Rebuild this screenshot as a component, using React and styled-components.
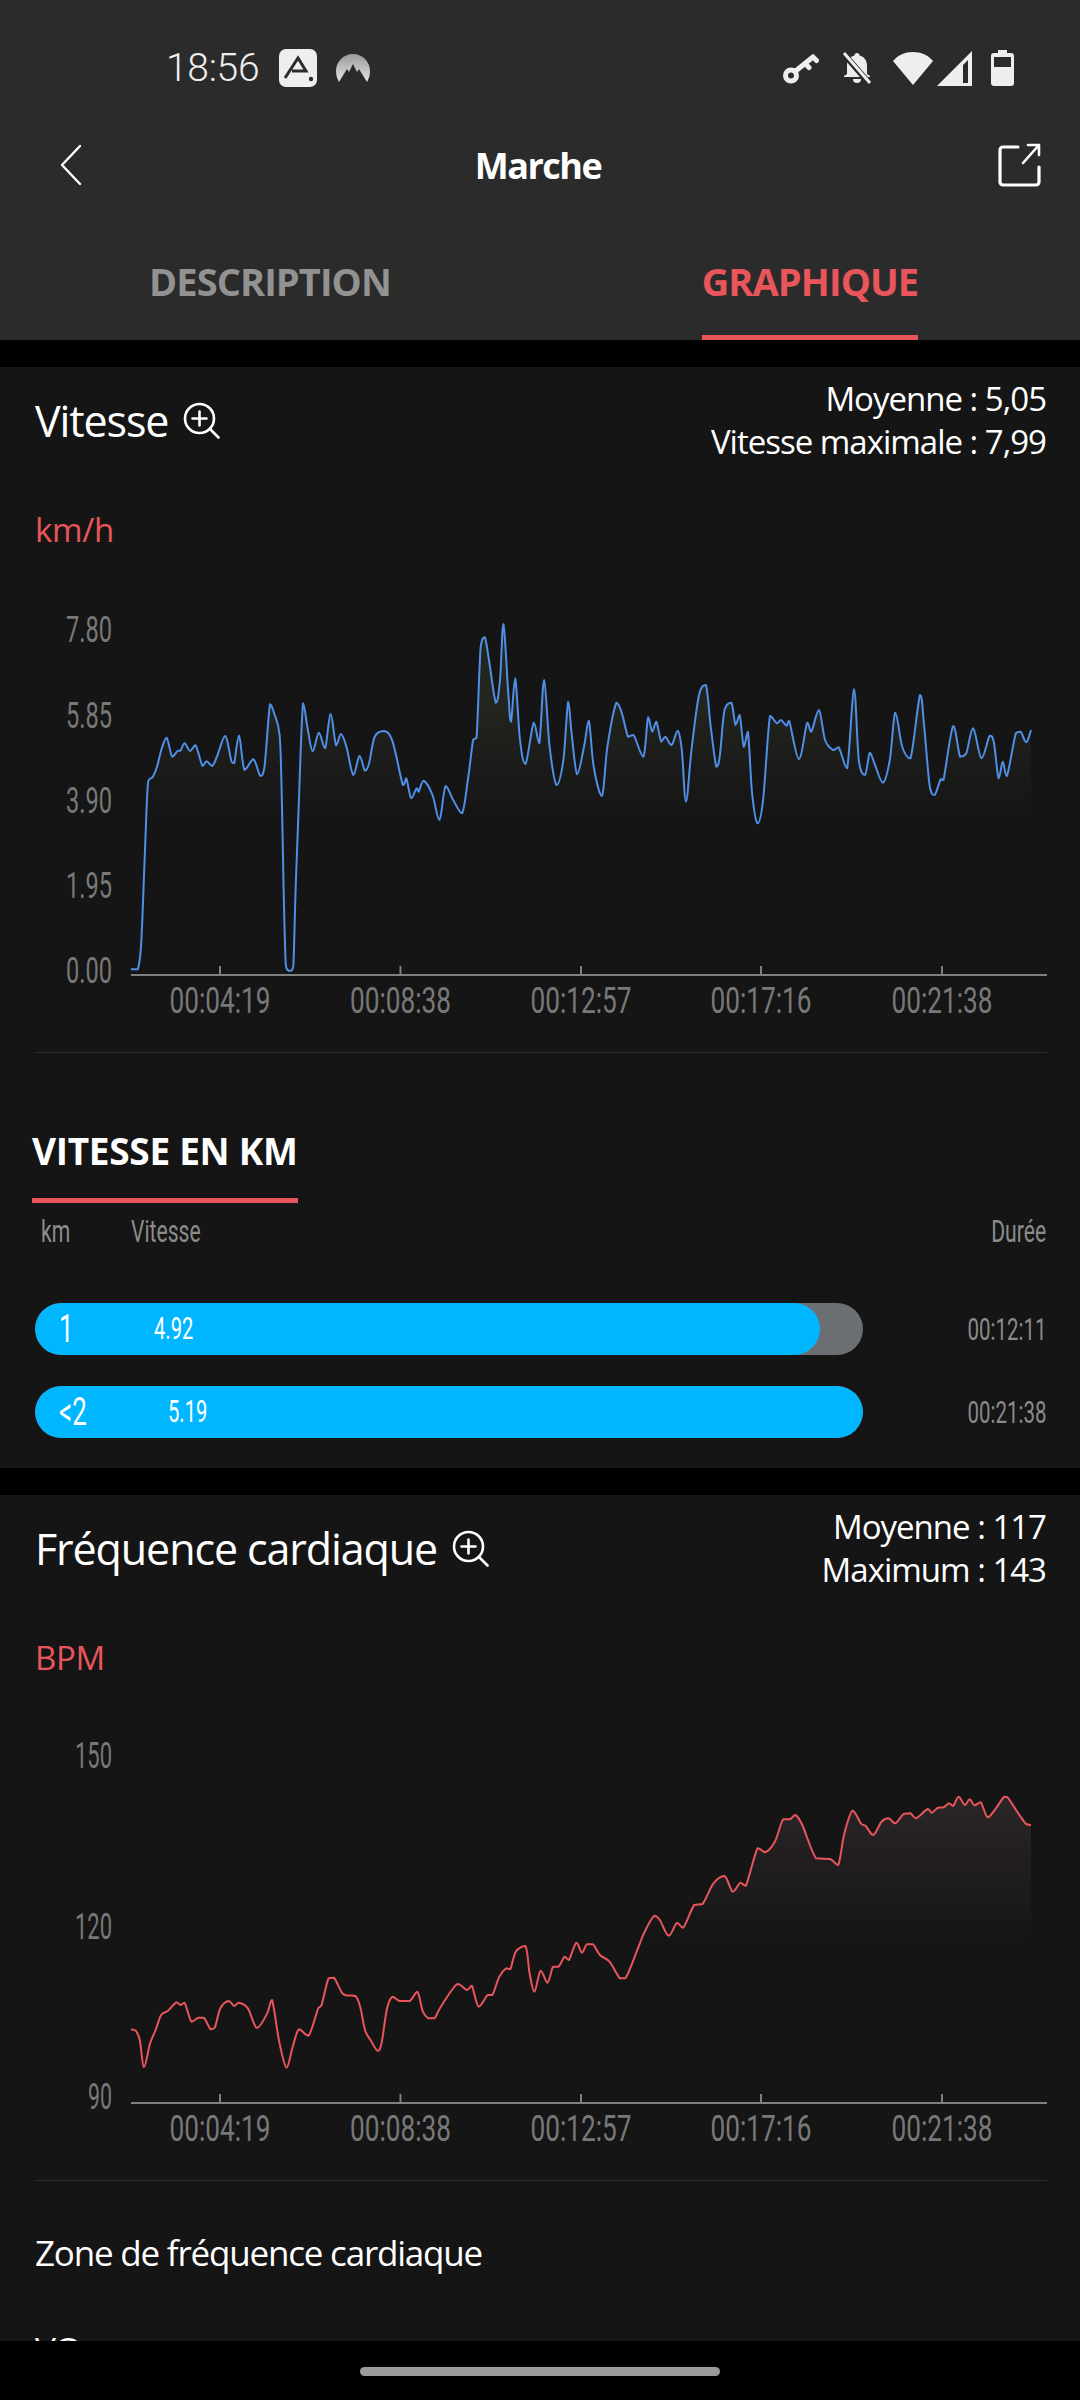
import styled, { createGlobalStyle } from "styled-components";

const RED = "#e8565b";
const SANS = `"Open Sans", "Noto Sans", sans-serif`;
const NUM = `Roboto, "Liberation Sans", sans-serif`;

const GlobalStyle = createGlobalStyle`
  html, body {
    margin: 0;
    padding: 0;
    background: #000;
  }
  * {
    box-sizing: border-box;
  }
`;

const Page = styled.div`
  width: 1080px;
  height: 2400px;
  display: flex;
  flex-direction: column;
  overflow: hidden;
  background: #000;
  font-family: ${SANS};
  color: #fff;
`;

const Header = styled.header`
  height: 340px;
  flex: none;
  background: #2b2b2b;
`;

const StatusBar = styled.div`
  height: 110px;
  padding: 26px 66px 0 166px;
  display: flex;
  align-items: center;
`;

const Clock = styled.span`
  font-family: ${NUM};
  font-size: 39px;
  font-weight: 300;
  color: #eee;
  letter-spacing: -0.3px;
  margin-right: 20px;
`;

const StatusIcon = styled.svg`
  flex: none;
  display: block;
  margin-left: ${(p) => p.$ml || 0}px;
`;

const StatusRight = styled.div`
  margin-left: auto;
  display: flex;
  align-items: center;
`;

const TopBar = styled.div`
  height: 110px;
  padding: 0 39px 0 60px;
  display: flex;
  align-items: center;
  justify-content: space-between;
`;

const Title = styled.h1`
  margin: 0 4px 0 0;
  font-size: 36px;
  font-weight: 700;
  letter-spacing: -1.5px;
`;

const Tabs = styled.nav`
  height: 120px;
  display: grid;
  grid-template-columns: 1fr 1fr;
`;

const TabCell = styled.div`
  display: flex;
  justify-content: center;
`;

const Tab = styled.span`
  height: 120px;
  padding-top: 33px;
  font-size: 38px;
  line-height: 56px;
  font-weight: 700;
  letter-spacing: -0.9px;
  color: ${(p) => (p.$active ? RED : "#929292")};
  border-bottom: 5px solid ${(p) => (p.$active ? RED : "transparent")};
`;

const Section = styled.section`
  flex: none;
  background: #151515;
  padding-bottom: 30px;
  margin-top: 27px;
`;

const LastSection = styled(Section)`
  flex: 1;
  min-height: 0;
  padding-bottom: 0;
  overflow: hidden;
`;

const SectionHead = styled.div`
  padding: 10px 34px 0 35px;
  height: 97px;
  display: flex;
  justify-content: space-between;
  align-items: flex-start;
`;

const SectionTitle = styled.h2`
  margin: 0;
  height: 86px;
  display: flex;
  align-items: center;
  gap: 15px;
  font-size: 43px;
  font-weight: 400;
  letter-spacing: -1.1px;
`;

const Stats = styled.div`
  text-align: right;
  font-size: 33px;
  line-height: 43px;
  letter-spacing: -1px;
`;

const Unit = styled.div`
  margin: 46px 0 0 35px;
  height: 40px;
  line-height: 40px;
  font-size: 33px;
  letter-spacing: -0.3px;
  color: ${RED};
`;

const ChartSvg = styled.svg`
  display: block;
`;

const AxisLabel = styled.text`
  font-family: ${NUM};
  font-size: 37px;
  fill: #787878;
`;

const Divider = styled.div`
  height: 1px;
  margin: 0 33px 0 35px;
  background: #2b2b2b;
`;

const Subhead = styled.h3`
  display: inline-block;
  margin: 73px 0 0 32px;
  padding-bottom: 22px;
  font-size: 37px;
  line-height: 50px;
  font-weight: 700;
  letter-spacing: -0.3px;
  border-bottom: 5px solid ${RED};
`;

const ColHeads = styled.div`
  margin-top: 10px;
  height: 36px;
  padding: 0 34px 0 41px;
  display: flex;
  align-items: center;
  color: #8c8c8c;
`;

const Narrow = styled.span`
  display: inline-block;
  font-family: ${NUM};
  font-size: ${(p) => p.$size || 32}px;
  line-height: 36px;
  white-space: nowrap;
  transform: scaleX(${(p) => p.$scale || 0.66});
  transform-origin: ${(p) => (p.$right ? "right" : "left")} center;
`;

const KmHead = styled.div`
  width: 90px;
`;

const DurationHead = styled.div`
  margin-left: auto;
`;

const Rows = styled.div`
  margin-top: 54px;
  display: flex;
  flex-direction: column;
  gap: 31px;
`;

const Row = styled.div`
  height: 52px;
  padding: 0 34px 0 35px;
  display: flex;
  align-items: center;
  justify-content: space-between;
`;

const Track = styled.div`
  width: 828px;
  height: 52px;
  border-radius: 26px;
  background: #6b6e72;
  overflow: hidden;
`;

const Fill = styled.div`
  height: 100%;
  border-radius: 26px;
  background: #00b7ff;
  padding-left: 24px;
  display: flex;
  align-items: center;
  color: #fff;
`;

const KmCell = styled.div`
  width: ${(p) => p.$w}px;
  flex: none;
`;

const Duration = styled.div`
  color: #8a8a8a;
`;

const ListItem = styled.div`
  margin: ${(p) => p.$top}px 0 0 35px;
  height: 50px;
  line-height: 50px;
  font-size: 35px;
  letter-spacing: -1.2px;
  white-space: nowrap;
`;

const BottomNav = styled.div`
  height: 59px;
  flex: none;
  padding-top: 2px;
  background: #000;
  display: flex;
  align-items: center;
  justify-content: center;
`;

const HomePill = styled.div`
  width: 360px;
  height: 9px;
  border-radius: 5px;
  background: #9b9b9b;
`;

// traced from the graph, x is 1568 wide and y is 3x
const speedPoints = [[190,1228],[200,1228],[205,1150],[210,900],[215,665],[222,650],[228,620],[235,565],[242,533],[250,590],[258,572],[262,572],[268,550],[276,573],[284,556],[294,618],[300,604],[308,618],[315,590],[327,528],[336,604],[340,610],[347,527],[355,630],[368,598],[378,648],[384,620],[392,433],[398,460],[406,525],[409,700],[412,1000],[415,1215],[419,1232],[423,1232],[426,1215],[429,1000],[433,780],[440,430],[447,510],[454,574],[463,518],[472,565],[480,462],[488,556],[495,522],[503,560],[513,645],[522,588],[530,632],[536,610],[544,530],[558,513],[570,545],[585,675],[590,655],[597,715],[605,685],[608,695],[615,662],[628,705],[638,780],[647,678],[658,720],[671,760],[680,650],[687,540],[692,532],[698,260],[704,232],[710,300],[720,428],[726,360],[731,192],[738,400],[742,485],[748,355],[755,540],[763,612],[775,488],[783,550],[790,360],[798,560],[808,675],[818,600],[825,425],[830,520],[838,643],[848,560],[855,482],[862,620],[874,708],[882,560],[895,428],[903,460],[912,530],[920,525],[934,590],[941,472],[947,515],[953,485],[960,545],[966,530],[975,555],[984,512],[990,570],[996,725],[1004,570],[1015,405],[1025,375],[1032,500],[1040,620],[1045,590],[1052,450],[1062,428],[1068,495],[1074,465],[1080,560],[1086,515],[1092,700],[1100,790],[1108,720],[1118,468],[1128,490],[1134,480],[1142,497],[1146,483],[1160,597],[1172,488],[1178,515],[1189,450],[1198,540],[1210,570],[1218,562],[1230,625],[1240,388],[1247,600],[1256,645],[1263,578],[1270,612],[1282,668],[1292,600],[1300,458],[1310,560],[1322,595],[1336,405],[1342,500],[1350,680],[1357,705],[1366,657],[1370,660],[1384,498],[1394,590],[1403,580],[1413,505],[1425,595],[1437,527],[1443,545],[1450,655],[1456,605],[1462,648],[1475,520],[1482,515],[1490,547],[1497,510]];

const heartPoints = [[190,988],[197,992],[203,1020],[209,1102],[218,1030],[226,990],[234,945],[244,932],[256,907],[262,915],[268,908],[278,965],[288,953],[296,953],[306,988],[312,982],[320,925],[332,903],[340,918],[347,908],[360,925],[373,984],[388,940],[395,900],[405,1020],[416,1103],[425,1040],[434,988],[448,1007],[462,925],[467,915],[477,835],[485,833],[497,880],[503,886],[516,888],[523,920],[530,990],[538,1020],[548,1052],[554,1030],[562,925],[570,890],[580,903],[595,903],[606,875],[614,935],[622,955],[631,955],[640,920],[664,852],[678,870],[685,857],[695,920],[708,885],[715,885],[725,830],[735,805],[741,808],[749,755],[763,738],[769,820],[776,875],[785,812],[795,848],[803,800],[811,800],[820,770],[826,780],[837,728],[845,758],[852,733],[861,733],[871,765],[885,785],[900,835],[908,835],[918,790],[935,700],[950,647],[958,660],[971,707],[983,668],[992,683],[1008,615],[1020,612],[1036,550],[1052,528],[1064,575],[1075,548],[1083,557],[1100,445],[1111,457],[1125,425],[1137,358],[1147,358],[1155,345],[1165,375],[1185,475],[1205,477],[1217,495],[1226,400],[1238,332],[1250,370],[1257,378],[1268,405],[1280,365],[1290,355],[1300,370],[1312,342],[1322,340],[1330,355],[1347,327],[1353,338],[1362,323],[1370,322],[1378,310],[1384,318],[1392,290],[1401,315],[1408,298],[1415,316],[1424,307],[1434,352],[1446,325],[1458,290],[1463,292],[1477,335],[1490,372],[1497,375]];

const xTicks = [
  { x: 220, label: "00:04:19" },
  { x: 400.5, label: "00:08:38" },
  { x: 581, label: "00:12:57" },
  { x: 761, label: "00:17:16" },
  { x: 942, label: "00:21:38" },
];

const CHART_H = 502;
const AXIS_Y = 425;

const clamp = (v, a, b) => Math.min(Math.max(v, Math.min(a, b)), Math.max(a, b));

// catmull-rom through the traced points, controls kept inside each segment so peaks don't overshoot
const smoothPath = (pts) => {
  let d = `M${pts[0][0]} ${pts[0][1]}`;
  for (let i = 0; i < pts.length - 1; i++) {
    const p0 = pts[i - 1] || pts[i];
    const p1 = pts[i];
    const p2 = pts[i + 1];
    const p3 = pts[i + 2] || p2;
    const c1x = p1[0] + (p2[0] - p0[0]) / 6;
    const c1y = clamp(p1[1] + (p2[1] - p0[1]) / 6, p1[1], p2[1]);
    const c2x = p2[0] - (p3[0] - p1[0]) / 6;
    const c2y = clamp(p2[1] - (p3[1] - p1[1]) / 6, p1[1], p2[1]);
    d += `C${c1x.toFixed(1)} ${c1y.toFixed(1)} ${c2x.toFixed(1)} ${c2y.toFixed(1)} ${p2[0].toFixed(1)} ${p2[1].toFixed(1)}`;
  }
  return d;
};

const Chart = ({ id, points, originY, stroke, tint, fadeTop, fadeBottom, yLabels }) => {
  const pts = points.map(([x, y]) => [x / 1.452, originY + y / 3]);
  const line = smoothPath(pts);
  const last = pts[pts.length - 1];
  const area = `${line}L${last[0]} ${fadeBottom}L${pts[0][0]} ${fadeBottom}Z`;
  return (
    <ChartSvg width="1080" height={CHART_H} viewBox={`0 0 1080 ${CHART_H}`}>
      <defs>
        <linearGradient id={id} gradientUnits="userSpaceOnUse" x1="0" x2="0" y1={fadeTop} y2={fadeBottom}>
          <stop offset="0" stopColor={tint} />
          <stop offset="1" stopColor={tint} stopOpacity="0" />
        </linearGradient>
      </defs>
      <path d={area} fill={`url(#${id})`} />
      <path d={line} fill="none" stroke={stroke} strokeWidth="2" strokeLinejoin="round" />
      <rect x="131" y={AXIS_Y - 1} width="916" height="2" fill="#808080" />
      {xTicks.map((t) => (
        <rect key={t.x} x={t.x - 1} y={AXIS_Y - 9} width="2" height="9" fill="#808080" />
      ))}
      {xTicks.map((t) => (
        <AxisLabel key={t.label} x={t.x - 50.5} y={AXIS_Y + 38} textLength="101" lengthAdjust="spacingAndGlyphs">
          {t.label}
        </AxisLabel>
      ))}
      {yLabels.map((l) => {
        const w = { 4: 46, 3: 37, 2: 24 }[l.text.length];
        return (
          <AxisLabel key={l.text} x={112 - w} y={l.y + 11} textLength={w} lengthAdjust="spacingAndGlyphs">
            {l.text}
          </AxisLabel>
        );
      })}
    </ChartSvg>
  );
};

const ZoomIcon = () => (
  <svg width="37" height="37" viewBox="0 0 37 37" fill="none" stroke="#fff" strokeWidth="2.6" strokeLinecap="round">
    <circle cx="16.5" cy="16.5" r="14.5" />
    <path d="M27 27l8.500 8.500M16.500 9.500v14M9.500 16.500h14" />
  </svg>
);

const BackIcon = () => (
  <svg width="22" height="42" viewBox="0 0 22 42" fill="none" stroke="#fff" strokeWidth="2.4" strokeLinecap="round" strokeLinejoin="round">
    <path d="M20 2L2 21l18 19" />
  </svg>
);

const ShareIcon = () => (
  <svg width="43" height="44" viewBox="0 0 43 44" fill="none" stroke="#fff" strokeWidth="3.2" strokeLinecap="round" strokeLinejoin="round">
    <path d="M20 4H5a3 3 0 0 0-3 3v32a3 3 0 0 0 3 3h33a3 3 0 0 0 3-3V24" />
    <path d="M25 20L41 2M30 2h11v10" strokeWidth="2.6" />
  </svg>
);

const StatusIcons = () => (
  <StatusRight>
    {/* vpn key */}
    <StatusIcon width="36" height="32" viewBox="0 0 36 32" fill="none" stroke="#eee" strokeWidth="5">
      <circle cx="8" cy="23.5" r="5.5" />
      <path d="M12 19.500L30 5M30 5l3.500 3.500M22 11.500l4 4" strokeLinecap="round" />
    </StatusIcon>
    {/* muted bell */}
    <StatusIcon $ml={22} width="32" height="32" viewBox="0 0 32 32" fill="#eee">
      <path d="M16 1c1.500 0 2.600 1 2.600 2.400C24 4.800 26 9 26 14v8l3 2v1H3v-1l3-2v-8C6 9 8 4.800 13.400 3.400 13.400 2 14.500 1 16 1z" />
      <path d="M12 27h8a4 4 0 0 1-8 0z" />
      <path d="M2 1l26 30" stroke="#2b2b2b" strokeWidth="6" />
      <path d="M3 1l26 30" stroke="#eee" strokeWidth="3" />
    </StatusIcon>
    {/* wifi */}
    <StatusIcon $ml={20} width="40" height="33" viewBox="0 0 40 33" fill="#eee">
      <path d="M0 9C5 3 12 0 20 0s15 3 20 9L20 33z" />
    </StatusIcon>
    {/* signal */}
    <StatusIcon $ml={4} width="36" height="35" viewBox="0 0 36 35" fill="#eee">
      <path fillRule="evenodd" d="M0 35L35 0v35zM26 32h5V9l-5 5z" />
    </StatusIcon>
    {/* battery */}
    <StatusIcon $ml={18} width="23" height="36" viewBox="0 0 23 36" fill="#eee">
      <path fillRule="evenodd" d="M7 0h9v3h4a3 3 0 0 1 3 3v27a3 3 0 0 1-3 3H3a3 3 0 0 1-3-3V6a3 3 0 0 1 3-3h4zM3 7v10h17V7z" />
    </StatusIcon>
  </StatusRight>
);

const distances = [
  { km: "1", speed: "4.92", time: "00:12:11", pct: 94.8, w: 95 },
  { km: "<2", speed: "5.19", time: "00:21:38", pct: 100, w: 109 },
];

export default function App() {
  return (
    <>
      <GlobalStyle />
      <Page>
        <Header>
          <StatusBar>
            <Clock>18:56</Clock>
            <StatusIcon width="38" height="38" viewBox="0 0 38 38">
              <rect width="38" height="38" rx="7" fill="#eee" />
              <path d="M6 29L19 9l8 13H13" fill="none" stroke="#2b2b2b" strokeWidth="3" />
              <circle cx="32" cy="30" r="2.200" fill="#2b2b2b" />
            </StatusIcon>
            <StatusIcon $ml={18} width="36" height="30" viewBox="0 0 36 30">
              <defs>
                <linearGradient id="nord" x1="0" x2="0" y1="0" y2="1">
                  <stop offset="0" stopColor="#9a9a9a" />
                  <stop offset="1" stopColor="#e4e4e4" />
                </linearGradient>
              </defs>
              <path
                fill="url(#nord)"
                d="M18 1C8 1 1 9 1 18c0 4 1 7.500 3 11l8-13 2 3 4-8 4 8 2-3 8 13c2-3.500 3-7 3-11C35 9 28 1 18 1z"
              />
            </StatusIcon>
            <StatusIcons />
          </StatusBar>
          <TopBar>
            <BackIcon />
            <Title>Marche</Title>
            <ShareIcon />
          </TopBar>
          <Tabs>
            <TabCell>
              <Tab>DESCRIPTION</Tab>
            </TabCell>
            <TabCell>
              <Tab $active>GRAPHIQUE</Tab>
            </TabCell>
          </Tabs>
        </Header>

        <Section>
          <SectionHead>
            <SectionTitle>
              Vitesse <ZoomIcon />
            </SectionTitle>
            <Stats>
              Moyenne : 5,05
              <br />
              Vitesse maximale : 7,99
            </Stats>
          </SectionHead>
          <Unit>km/h</Unit>
          <Chart
            id="speedFill"
            points={speedPoints}
            originY={10}
            stroke="#4f8fe6"
            tint="#23251f"
            fadeTop={150}
            fadeBottom={265}
            yLabels={[
              { text: "7.80", y: 81 },
              { text: "5.85", y: 167 },
              { text: "3.90", y: 252 },
              { text: "1.95", y: 337 },
              { text: "0.00", y: 422 },
            ]}
          />
          <Divider />
          <Subhead>VITESSE EN KM</Subhead>
          <ColHeads>
            <KmHead>
              <Narrow>km</Narrow>
            </KmHead>
            <Narrow>Vitesse</Narrow>
            <DurationHead>
              <Narrow $right>Durée</Narrow>
            </DurationHead>
          </ColHeads>
          <Rows>
            {distances.map((d) => (
              <Row key={d.km}>
                <Track>
                  <Fill style={{ width: `${d.pct}%` }}>
                    <KmCell $w={d.w}>
                      <Narrow $size={38} $scale={0.68}>
                        {d.km}
                      </Narrow>
                    </KmCell>
                    <Narrow $size={31} $scale={0.65}>
                      {d.speed}
                    </Narrow>
                  </Fill>
                </Track>
                <Duration>
                  <Narrow $size={32} $scale={0.64} $right>
                    {d.time}
                  </Narrow>
                </Duration>
              </Row>
            ))}
          </Rows>
        </Section>

        <LastSection>
          <SectionHead>
            <SectionTitle>
              Fréquence cardiaque <ZoomIcon />
            </SectionTitle>
            <Stats>
              Moyenne : 117
              <br />
              Maximum : 143
            </Stats>
          </SectionHead>
          <Unit>BPM</Unit>
          <Chart
            id="heartFill"
            points={heartPoints}
            originY={22}
            stroke="#e8565b"
            tint="#2a2426"
            fadeTop={130}
            fadeBottom={265}
            yLabels={[
              { text: "150", y: 79 },
              { text: "120", y: 250 },
              { text: "90", y: 420 },
            ]}
          />
          <Divider />
          <ListItem $top={47}>Zone de fréquence cardiaque</ListItem>
          <ListItem $top={47}>VO</ListItem>
        </LastSection>

        <BottomNav>
          <HomePill />
        </BottomNav>
      </Page>
    </>
  );
}
